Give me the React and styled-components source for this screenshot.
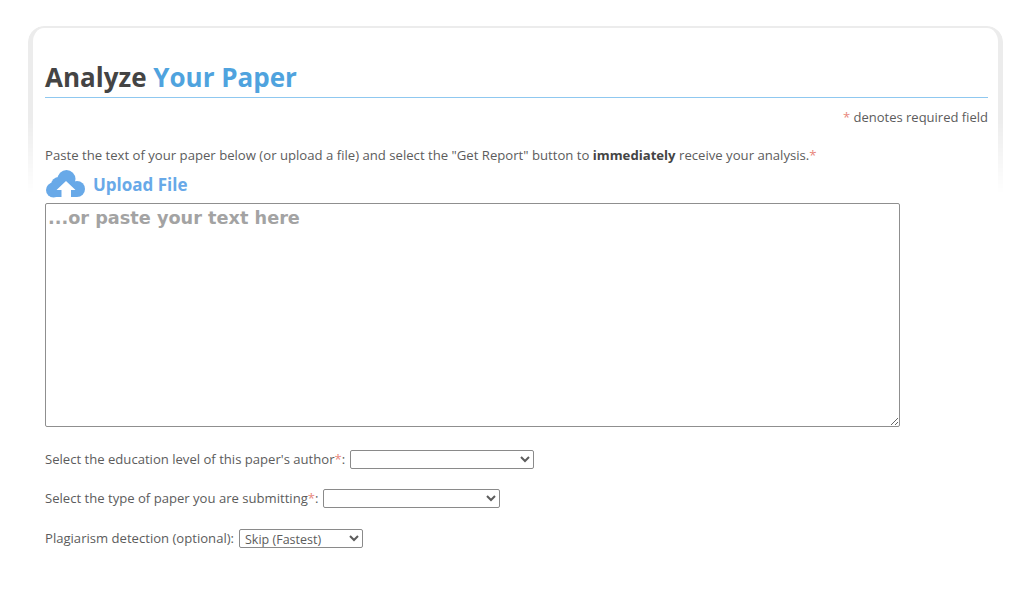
import React from "react";
import styled, { createGlobalStyle } from "styled-components";

const GlobalStyle = createGlobalStyle`
  html, body {
    margin: 0;
    padding: 0;
    background: #fff;
  }
  body {
    font-family: "Open Sans", "Liberation Sans", sans-serif;
    font-size: 13px;
    color: #5c5c5c;
  }
`;

const Page = styled.main`
  width: 1024px;
  height: 596px;
  overflow: hidden;
  padding: 26px 21px 0 28px;
  box-sizing: border-box;
`;

const Panel = styled.section`
  position: relative;
  padding: 34px 15px 0 17px;

  &::before {
    content: "";
    position: absolute;
    top: 0;
    left: 0;
    right: 0;
    height: 168px;
    box-sizing: border-box;
    border: solid #ececec;
    border-width: 2px 5px 0 5px;
    border-radius: 16px 16px 0 0;
    -webkit-mask-image: linear-gradient(to bottom, #000 55%, transparent 100%);
    mask-image: linear-gradient(to bottom, #000 55%, transparent 100%);
    pointer-events: none;
  }
`;

const Title = styled.h1`
  margin: 0;
  padding-bottom: 3px;
  border-bottom: 1px solid #8fc8f0;
  font-size: 26px;
  line-height: 34px;
  font-weight: 700;
  color: #444;
`;

const TitleAccent = styled.span`
  color: #4fa3de;
`;

const RequiredNote = styled.p`
  margin: 11px 0 0;
  text-align: right;
  font-size: 13px;
  line-height: 16px;
`;

const Star = styled.span`
  color: #e8877c;
`;

const Intro = styled.p`
  margin: 22px 0 0;
  font-size: 13.15px;
  line-height: 16px;
  white-space: nowrap;

  strong {
    color: #444;
  }
`;

const UploadLink = styled.a`
  display: flex;
  align-items: center;
  gap: 7px;
  height: 28px;
  margin-top: 7px;
  padding-left: 1px;
  font-size: 17px;
  font-weight: 700;
  color: #68a9e8;
  text-decoration: none;
`;

const PaperText = styled.textarea`
  display: block;
  width: 855px;
  height: 224px;
  margin: 5px 0 0;
  padding: 3px 2px;
  box-sizing: border-box;
  border: 1px solid #8f8f8f;
  border-radius: 2px;
  background: #fff;
  font-family: "DejaVu Sans", Verdana, sans-serif;
  font-size: 17.7px;
  font-weight: 700;
  line-height: 22px;
  outline: none;

  &::placeholder {
    color: #a3a3a3;
    opacity: 1;
  }
`;

const FieldRow = styled.label`
  display: flex;
  align-items: center;
  gap: 5px;
  height: 20px;
  margin-top: ${(p) => p.$top}px;
  font-size: 13.1px;
  white-space: nowrap;
`;

const Select = styled.select`
  width: ${(p) => p.$width}px;
  height: 19px;
  padding: 0 0 0 1px;
  box-sizing: border-box;
  border: 1px solid #8a8a8a;
  border-radius: 2px;
  background: #fff;
  font-family: "Open Sans", "Liberation Sans", sans-serif;
  font-size: 12.5px;
  color: #5c5c5c;
`;

const UploadCloud = () => (
  <svg width="40" height="28" viewBox="0 0 40 28" aria-hidden="true">
    <g fill="#68a9e8">
      <circle cx="7.5" cy="20" r="7.5" />
      <circle cx="13" cy="15" r="8" />
      <circle cx="20.5" cy="9" r="9" />
      <circle cx="31" cy="19" r="8" />
      <rect x="7.5" y="16" width="23.5" height="11" />
    </g>
    <path fill="#fff" d="M20 11l9.5 9H25v8h-9.5v-8H10.5z" />
  </svg>
);

const App = () => {
  return (
    <Page>
      <GlobalStyle />
      <Panel>
        <Title>
          Analyze <TitleAccent>Your Paper</TitleAccent>
        </Title>
        <RequiredNote>
          <Star>*</Star> denotes required field
        </RequiredNote>
        <Intro>
          Paste the text of your paper below (or upload a file) and select the "Get Report" button to{" "}
          <strong>immediately</strong> receive your analysis.<Star>*</Star>
        </Intro>
        <UploadLink href="#upload">
          <UploadCloud />
          Upload File
        </UploadLink>
        <PaperText placeholder="...or paste your text here" />
        <FieldRow $top={22}>
          <span>
            Select the education level of this paper's author<Star>*</Star>:
          </span>
          <Select $width={184}>
            <option></option>
          </Select>
        </FieldRow>
        <FieldRow $top={19}>
          <span>
            Select the type of paper you are submitting<Star>*</Star>:
          </span>
          <Select $width={177}>
            <option></option>
          </Select>
        </FieldRow>
        <FieldRow $top={20}>
          <span>Plagiarism detection (optional):</span>
          <Select $width={124}>
            <option>Skip (Fastest)</option>
          </Select>
        </FieldRow>
      </Panel>
    </Page>
  );
};

export default App;
